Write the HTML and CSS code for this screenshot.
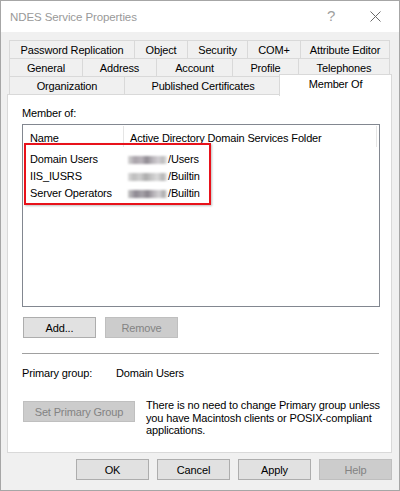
FILE: index.html
```html
<!DOCTYPE html>
<html>
<head>
<meta charset="utf-8">
<link rel="stylesheet" href="styles.css">
</head>
<body>
<div class="window">
  <div class="titlebar">
    <span class="title">NDES Service Properties</span>
    <span class="help-btn">?</span>
    <span class="close-btn"><svg width="11" height="11" viewBox="0 0 11 11"><path d="M0.5 0.5 L10.5 10.5 M10.5 0.5 L0.5 10.5" stroke="#6a6a6a" stroke-width="1" fill="none"/></svg></span>
  </div>
  <div class="content">
    <div class="tabs">
      <div class="tab-row row1">
        <div class="tab">Password Replication</div>
        <div class="tab">Object</div>
        <div class="tab">Security</div>
        <div class="tab">COM+</div>
        <div class="tab">Attribute Editor</div>
      </div>
      <div class="tab-row row2">
        <div class="tab">General</div>
        <div class="tab">Address</div>
        <div class="tab">Account</div>
        <div class="tab">Profile</div>
        <div class="tab">Telephones</div>
      </div>
      <div class="tab-row row3">
        <div class="tab">Organization</div>
        <div class="tab">Published Certificates</div>
        <div class="tab active">Member Of</div>
      </div>
    </div>
    <div class="panel">
      <div class="label">Member of:</div>
      <div class="listbox">
        <div class="list-header">
          <div class="col-name">Name</div>
          <div class="col-folder">Active Directory Domain Services Folder</div>
          <div class="col-rest"></div>
        </div>
        <div class="list-row">
          <div class="col-name">Domain Users</div>
          <div class="col-folder"><span class="blur b1"></span>/Users</div>
        </div>
        <div class="list-row">
          <div class="col-name">IIS_IUSRS</div>
          <div class="col-folder"><span class="blur b2"></span>/Builtin</div>
        </div>
        <div class="list-row">
          <div class="col-name">Server Operators</div>
          <div class="col-folder"><span class="blur b3"></span>/Builtin</div>
        </div>
        <div class="highlight"></div>
      </div>
      <div class="btn-row">
        <button class="btn">Add...</button>
        <button class="btn" disabled>Remove</button>
      </div>
      <div class="separator"></div>
      <div class="primary">
        <span class="primary-label">Primary group:</span>
        <span>Domain Users</span>
      </div>
      <div class="set-row">
        <button class="btn btn-wide" disabled>Set Primary Group</button>
        <p class="note">There is no need to change Primary group unless you have Macintosh clients or POSIX-compliant applications.</p>
      </div>
    </div>
    <div class="footer">
      <button class="btn">OK</button>
      <button class="btn">Cancel</button>
      <button class="btn">Apply</button>
      <button class="btn" disabled>Help</button>
    </div>
  </div>
</div>
</body>
</html>
```

FILE: styles.css
```css
* { box-sizing: border-box; }
html, body { margin: 0; padding: 0; }
body {
  width: 400px;
  height: 491px;
  overflow: hidden;
  font-family: "Liberation Sans", Arial, sans-serif;
  font-size: 11px;
  letter-spacing: -0.15px;
  color: #000;
}
.window {
  width: 400px;
  height: 491px;
  border: 1px solid #a6a6a6;
  background: #f0f0f0;
  display: flex;
  flex-direction: column;
}
.titlebar {
  height: 31px;
  background: #fff;
  display: flex;
  align-items: center;
  position: relative;
  flex-shrink: 0;
}
.title {
  padding-left: 9px;
  font-size: 11.5px;
  color: #999;
  letter-spacing: -0.1px;
}
.help-btn {
  position: absolute;
  left: 326px;
  top: 6px;
  font-size: 15px;
  color: #a0a0a0;
  font-family: "Liberation Sans", sans-serif;
}
.close-btn {
  position: absolute;
  left: 369px;
  top: 10px;
  display: block;
  line-height: 0;
}
.content {
  padding: 8px 7px 0 6px;
  display: flex;
  flex-direction: column;
}
.tabs {
  margin: 0 2px;
  display: flex;
  flex-direction: column;
}
.tab-row {
  display: grid;
  height: 18px;
}
.row1 { grid-template-columns: 125px 53px 60px 53px 90px; }
.row2 { grid-template-columns: 73px 74px 76px 66px 92px; }
.row3 { grid-template-columns: 115px 157px 109px; }
.tab {
  border-top: 1px solid #d9d9d9;
  border-left: 1px solid #d9d9d9;
  background: #f0f0f0;
  text-align: center;
  line-height: 17px;
  padding-top: 1px;
  white-space: nowrap;
}
.tab:last-child { border-right: 1px solid #d9d9d9; }
.tab.active {
  position: relative;
  z-index: 2;
  background: #fff;
  margin: -2px -2px -1px -2px;
  border-right: 1px solid #d9d9d9;
  padding-top: 0;
  line-height: 19px;
}
.panel {
  height: 359px;
  background: #fff;
  border: 1px solid #d9d9d9;
  padding: 11px 11px 0 14px;
  display: flex;
  flex-direction: column;
  position: relative;
  z-index: 1;
}
.label {
  line-height: 15px;
}
.listbox {
  margin-top: 3px;
  height: 183px;
  border: 1px solid #828790;
  position: relative;
}
.list-header {
  display: flex;
  height: 26px;
  align-items: center;
}
.list-header .col-name,
.list-header .col-folder {
  height: 21px;
  line-height: 24px;
  border-right: 1px solid #e5e5e5;
  align-self: flex-start;
  margin-top: 1px;
}
.list-header .col-rest { flex: 1; }
.col-name {
  width: 101px;
  padding-left: 7px;
  white-space: nowrap;
}
.col-folder {
  width: 253px;
  padding-left: 6px;
  white-space: nowrap;
}
.list-row {
  display: flex;
  height: 17px;
  line-height: 17px;
}
.list-row .col-folder { padding-left: 4px; }
.blur {
  display: inline-block;
  width: 39px;
  height: 8px;
  vertical-align: -1px;
  filter: blur(0.8px);
  margin-right: 1px;
}
.b1 { background: linear-gradient(90deg, #d6d6d6 0%, #a9a3aa 18%, #b9b4ba 34%, #8f8a92 48%, #b6b2b7 62%, #d2cfd3 78%, #bcbcbc 90%, #e6e6e6 100%); }
.b2 { background: linear-gradient(90deg, #dcdcdc 0%, #bdbdbd 15%, #cfcfcf 30%, #acacac 46%, #c5c5c5 60%, #dadada 75%, #b3b3b3 90%, #e4e4e4 100%); }
.b3 { background: linear-gradient(90deg, #c9c9c9 0%, #8d8891 20%, #a7a3a9 36%, #8a858d 50%, #b8b4b9 66%, #d3d1d4 80%, #a9a9a9 92%, #e3e3e3 100%); }
.highlight {
  position: absolute;
  left: 1px;
  top: 18px;
  width: 187px;
  height: 62px;
  border: 2px solid #e8121b;
  box-shadow: 1px 1px 2px rgba(0, 0, 0, 0.25);
}
.btn-row {
  margin-top: 10px;
  display: flex;
  gap: 9px;
  padding-left: 1px;
}
.btn {
  width: 73px;
  height: 21px;
  background: #e1e1e1;
  border: 1px solid #adadad;
  font-family: inherit;
  font-size: 11px;
  letter-spacing: -0.15px;
  color: #000;
  padding: 0;
  margin: 0;
}
.btn:disabled {
  background: #cccccc;
  border-color: #bfbfbf;
  color: #838383;
}
.btn-wide { width: 112px; flex-shrink: 0; }
.separator {
  margin-top: 15px;
  height: 1px;
  background: #a0a0a0;
  margin-right: 1px;
}
.primary {
  margin-top: 12px;
  line-height: 15px;
  display: flex;
}
.primary-label { width: 94px; }
.set-row {
  margin-top: 20px;
  display: flex;
  align-items: flex-start;
  padding-left: 1px;
}
.note {
  margin: -2px 0 0 11px;
  line-height: 12.5px;
  width: 236px;
}
.footer {
  display: flex;
  justify-content: flex-end;
  gap: 8px;
  margin-top: 6px;
}
```
